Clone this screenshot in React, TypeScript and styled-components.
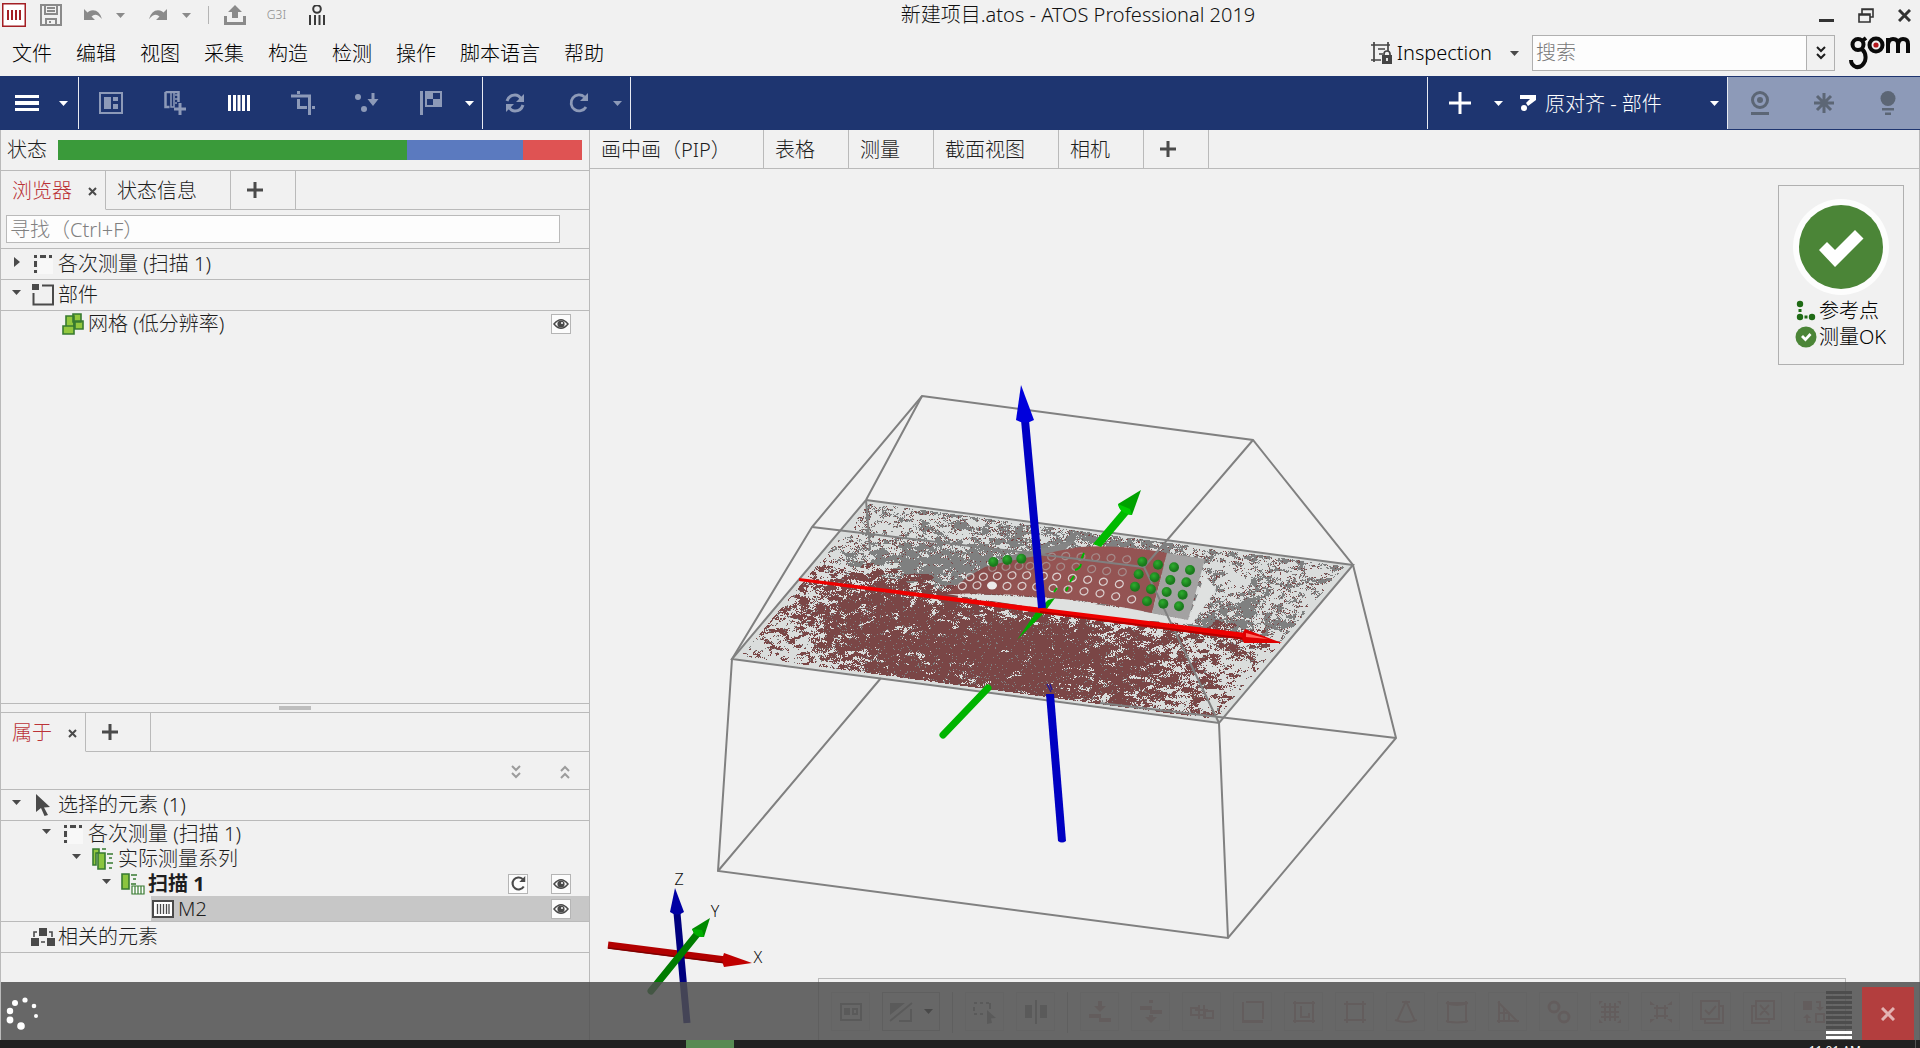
import React from "react";
import styled, { createGlobalStyle, css } from "styled-components";

const GlobalStyle = createGlobalStyle`
  *, *::before, *::after { box-sizing: border-box; }
  html, body, #root { height: 100%; }
  body {
    margin: 0;
    background: #f1f1f1;
    color: #1e1e1e;
    font-family: "Noto Sans", "Noto Sans CJK SC", sans-serif;
    font-size: 20px;
    font-weight: 300;
    line-height: 24px;
  }
  button, input {
    font: inherit;
    color: inherit;
    margin: 0;
    padding: 0;
    border: 0;
    background: none;
  }
  button { cursor: pointer; }
  svg { display: block; flex: none; }
`;

const navy = "#1e3570";
const line = "#bababa";
const dark = "#4a4a4a";
const pale = "#8d9ab8";

/* ---------- shell ---------- */

const Shell = styled.div`
  display: flex;
  flex-direction: column;
  height: 100vh;
  overflow: hidden;
`;

const TitleBar = styled.header`
  display: grid;
  grid-template-columns: 1fr auto 1fr;
  align-items: center;
  height: 30px;
  flex: none;
`;

const QuickTools = styled.div`
  display: flex;
  align-items: center;
  padding-left: 2px;
`;

const QuickButton = styled.button<{ $w: number }>`
  display: flex;
  justify-content: center;
  align-items: center;
  width: ${(p) => p.$w}px;
  height: 30px;
  font-size: 12px;
  color: #8a8a8a;
`;

const QuickRule = styled.span`
  width: 1px;
  height: 18px;
  background: #b4b4b4;
`;

const Title = styled.h1`
  margin: 0;
  font-size: 20px;
  font-weight: 300;
  line-height: 30px;
  color: #111;
  padding-left: 236px;
`;

const WindowButtons = styled.div`
  display: flex;
  justify-content: flex-end;
  gap: 10px;
  padding-right: 1px;
`;

const WindowButton = styled.button`
  display: flex;
  align-items: center;
  justify-content: center;
  width: 29px;
  height: 30px;
`;

const MenuBar = styled.div`
  display: flex;
  align-items: center;
  height: 46px;
  flex: none;
  padding: 0 10px 0 12px;
`;

const Menus = styled.nav`
  display: flex;
  gap: 24px;
  flex: 1;
  padding-top: 2px;
  color: #000;
`;

const InspectionButton = styled.button`
  display: flex;
  align-items: center;
  gap: 4px;
  color: #000;
  margin-right: 13px;

  & > span { margin-right: 14px; }
`;

const SearchBox = styled.div`
  display: flex;
  width: 303px;
  height: 36px;
  border: 1px solid #b0b0b0;
  margin-right: 14px;
`;

const SearchInput = styled.input`
  flex: 1;
  min-width: 0;
  padding-left: 3px;
  background: #fdfdfd;
  &::placeholder { color: #787878; opacity: 1; }
`;

const SearchMore = styled.button`
  display: flex;
  align-items: center;
  justify-content: center;
  width: 28px;
  border-left: 1px solid #b0b0b0;
`;

/* ---------- main toolbar ---------- */

const ToolBar = styled.div`
  display: flex;
  justify-content: space-between;
  height: 54px;
  flex: none;
  background: ${navy};
`;

const ToolSide = styled.div`
  display: flex;
`;

const ToolGroup = styled.div<{ $rule?: "left" | "right" }>`
  display: flex;
  align-items: center;
  margin: 1px 0;
  ${(p) =>
    p.$rule === "right" &&
    css`
      padding-right: 6px;
      border-right: 1px solid #e8ebf2;
    `}
  ${(p) => p.$rule === "left" && css`border-left: 1px solid #e8ebf2;`}
`;

const ToolButton = styled.button<{ $w?: number }>`
  display: flex;
  align-items: center;
  justify-content: center;
  width: ${(p) => p.$w ?? 64}px;
  height: 52px;
  color: ${pale};
`;

const Alignment = styled.button`
  display: flex;
  align-items: center;
  gap: 9px;
  width: 222px;
  height: 52px;
  padding: 0 8px 0 15px;
  color: #fff;
  & > span { flex: 1; text-align: left; padding-top: 1px; }
`;

const ModeGroup = styled.div`
  display: flex;
  align-items: center;
  width: 193px;
  margin: 1px 0;
  background: #8d9ab8;
  border-left: 1px solid #e8ebf2;
  & > button { color: #5c6675; }
`;

/* ---------- work area ---------- */

const Work = styled.main`
  position: relative;
  display: flex;
  flex: 1;
  min-height: 0;
`;

const SidePanel = styled.aside`
  display: flex;
  flex-direction: column;
  width: 590px;
  flex: none;
  border-left: 1px solid ${line};
  border-right: 1px solid ${line};
`;

const StatusRow = styled.div`
  display: flex;
  align-items: center;
  height: 40px;
  padding: 0 7px 0 6px;
  gap: 11px;
  flex: none;
`;

const StatusTrack = styled.div`
  display: flex;
  flex: 1;
  height: 20px;
`;

const StatusPart = styled.span<{ $share: number; $color: string }>`
  flex: ${(p) => p.$share};
  background: ${(p) => p.$color};
`;

const Tabs = styled.div<{ $top?: boolean }>`
  display: flex;
  height: ${(p) => (p.$top ? 40 : 39)}px;
  flex: none;
  ${(p) => p.$top && css`border-top: 1px solid ${line};`}
`;

const TabItem = styled.button<{ $w: number; $active?: boolean }>`
  display: flex;
  align-items: center;
  justify-content: space-between;
  width: ${(p) => p.$w}px;
  padding: 2px 8px 0 11px;
  border-right: 1px solid ${line};
  border-bottom: 1px solid ${(p) => (p.$active ? "transparent" : line)};
  color: ${(p) => (p.$active ? "#bb3338" : "#1e1e1e")};
  white-space: nowrap;
`;

const AddTab = styled(TabItem)`
  justify-content: flex-start;
  padding: 0 0 0 16px;
`;

const TabFill = styled.span`
  flex: 1;
  border-bottom: 1px solid ${line};
`;

const FindRow = styled.div`
  display: flex;
  height: 38px;
  padding: 5px 29px 4px 5px;
  flex: none;
`;

const FindInput = styled.input`
  flex: 1;
  height: 28px;
  border: 1px solid ${line};
  background: #fdfdfd;
  padding: 0 3px;
  &::placeholder { color: #808080; opacity: 1; }
`;

const Tree = styled.ul`
  list-style: none;
  margin: 0;
  padding: 0;
`;

const Item = styled.li<{ $kind: "head" | "leaf"; $level: number; $selected?: boolean; $bold?: boolean }>`
  display: flex;
  align-items: center;
  height: ${(p) => (p.$kind === "head" ? 31 : 25)}px;
  margin-left: ${(p) => p.$level * 30}px;
  padding-right: 18px;
  font-weight: ${(p) => (p.$bold ? 700 : 300)};
  ${(p) =>
    p.$kind === "head" &&
    css`
      border-top: 1px solid ${line};
    `}
  ${(p) =>
    p.$selected &&
    css`
      background: linear-gradient(to right, transparent 30px, #c7c7c7 30px);
    `}
`;

const CaretCell = styled.span`
  display: flex;
  justify-content: center;
  width: 31px;
  flex: none;
  padding-bottom: 5px;
`;

const IconCell = styled.span`
  display: flex;
  justify-content: center;
  width: 22px;
  flex: none;
  margin-right: 4px;
`;

const Label = styled.span`
  flex: 1;
  white-space: nowrap;
`;

const MiniButton = styled.button`
  display: flex;
  align-items: center;
  justify-content: center;
  width: 20px;
  height: 20px;
  margin-left: 23px;
  border: 1px solid #b5b5b5;
  background: #fcfcfc;
  color: ${dark};
`;

const TreeArea = styled.div`
  flex: 1;
  min-height: 0;
`;

const HeadLine = styled.div`
  border-top: 1px solid ${line};
`;

const Splitter = styled.div`
  display: flex;
  align-items: center;
  justify-content: center;
  height: 10px;
  flex: none;
  border-top: 1px solid ${line};
  border-bottom: 1px solid ${line};
  &::after {
    content: "";
    width: 32px;
    height: 4px;
    background: #bdbdbd;
  }
`;

const LowerPanel = styled.section`
  display: flex;
  flex-direction: column;
  height: 327px;
  flex: none;
`;

const FoldRow = styled.div`
  display: flex;
  align-items: center;
  justify-content: flex-end;
  gap: 29px;
  height: 37px;
  padding: 2px 14px 0 0;
  flex: none;
`;

const FoldButton = styled.button`
  display: flex;
  justify-content: center;
  width: 20px;
  color: #9c9c9c;
`;

/* ---------- viewport ---------- */

const ViewPanel = styled.section`
  display: flex;
  flex-direction: column;
  flex: 1;
  min-width: 0;
  border-right: 1px solid ${line};
`;

const ViewPort = styled.div`
  position: relative;
  flex: 1;
  min-height: 0;
  overflow: hidden;
`;

const Scene = styled.svg`
  width: 100%;
  height: 100%;
`;

const ResultCard = styled.div`
  position: absolute;
  top: 16px;
  right: 15px;
  width: 126px;
  height: 180px;
  padding: 13px 10px 0 14px;
  border: 1px solid #b0b0b0;
  background: #f1f1f1;
  display: flex;
  flex-direction: column;
  color: #000;
  & > svg { margin-bottom: 3px; }
`;

const ResultLine = styled.div`
  display: flex;
  align-items: center;
  gap: 2px;
  height: 26px;
  white-space: nowrap;
`;

const ViewTools = styled.div`
  position: absolute;
  right: 73px;
  bottom: 0;
  display: flex;
  align-items: flex-start;
  gap: 12px;
  height: 62px;
  padding: 13px 12px 0;
  border: 1px solid ${line};
  border-bottom: 0;
`;

const ViewTool = styled.button<{ $wide?: boolean; $red?: boolean }>`
  display: flex;
  align-items: center;
  justify-content: center;
  gap: 11px;
  width: ${(p) => (p.$wide ? 58 : 39)}px;
  height: 39px;
  border: 1px solid ${(p) => (p.$wide ? "#b8b8b8" : "#dcdcdc")};
  color: ${(p) => (p.$red ? "#d6aea9" : "#989898")};
`;

const ViewRule = styled.span`
  width: 1px;
  height: 41px;
  background: ${line};
`;

const BusyBar = styled.div`
  position: absolute;
  left: 1px;
  right: 0;
  bottom: 0;
  height: 58px;
  display: flex;
  align-items: flex-end;
  background: rgba(79, 79, 79, 0.854);
`;

const Spinner = styled.div`
  flex: 1;
  align-self: stretch;
  display: flex;
  align-items: center;
  padding: 5px 0 0 5px;
`;

const Meter = styled.div`
  display: flex;
  flex-direction: column;
  gap: 2px;
  width: 26px;
  margin-right: 10px;
  padding-bottom: 1px;
`;

const MeterBar = styled.span<{ $on: boolean }>`
  height: 3px;
  background: ${(p) => (p.$on ? "#fff" : "#4d4d4d")};
`;

const CancelButton = styled.button`
  display: flex;
  align-items: center;
  justify-content: center;
  width: 52px;
  height: 53px;
  margin-right: 6px;
  background: #b33e3e;
`;

const TaskBar = styled.footer`
  display: flex;
  justify-content: space-between;
  height: 8px;
  flex: none;
  overflow: hidden;
  background: #212121;
  border-right: 1px solid #555;
  margin-right: 4px;
  box-shadow: 4px 0 0 #212121;
`;

const TaskActive = styled.span`
  width: 48px;
  margin-left: 686px;
  background: #588a53;
`;

const Clock = styled.time`
  padding: 3px 54px 0 0;
  font-size: 12px;
  font-weight: 400;
  line-height: 16px;
  color: #fff;
  white-space: nowrap;
`;

/* ---------- small icons ---------- */

const Caret = ({ color = dark, dir = "down" }: { color?: string; dir?: "down" | "right" }) =>
  dir === "down" ? (
    <svg width="9" height="5" viewBox="0 0 9 5">
      <path d="M0 0h9L4.500 5z" fill={color} />
    </svg>
  ) : (
    <svg width="6" height="10" viewBox="0 0 6 10">
      <path d="M0 0v10L6 5z" fill={color} />
    </svg>
  );

const Plus = () => (
  <svg width="16" height="16" viewBox="0 0 16 16" stroke={dark} strokeWidth="3">
    <path d="M8 0v16M0 8h16" />
  </svg>
);

const Close = () => (
  <svg width="9" height="9" viewBox="0 0 9 9" stroke={dark} strokeWidth="2">
    <path d="M1 1l7 7M8 1L1 8" />
  </svg>
);

const Chevrons = ({ up }: { up?: boolean }) => (
  <svg width="10" height="14" viewBox="0 0 10 14" fill="none" stroke="currentColor" strokeWidth="2">
    <path d={up ? "M1 6l4-4 4 4M1 13l4-4 4 4" : "M1 1l4 4 4-4M1 8l4 4 4-4"} />
  </svg>
);

const Eye = () => (
  <svg width="16" height="12" viewBox="0 0 16 12">
    <path d="M1 6Q8-2.500 15 6Q8 14.500 1 6z" fill="none" stroke={dark} strokeWidth="1.500" />
    <circle cx="8" cy="6" r="3.600" fill={dark} />
    <circle cx="9" cy="5" r="1" fill="#fff" />
  </svg>
);

const Reload = ({ size = 14 }: { size?: number }) => (
  <svg width={size} height={size} viewBox="0 0 20 20" fill="none" stroke="currentColor" strokeWidth="2.800">
    <path d="M17 14A8 8 0 1 1 15.500 4" />
    <path d="M19 0v8h-8z" fill="currentColor" stroke="none" />
  </svg>
);

const DashedBox = () => (
  <svg width="20" height="20" viewBox="0 0 20 20" fill={dark}>
    <path d="M5 5h15v15H5z" fill="#f8f8f8" />
    <path d="M1 1h3v3H1zM7 1h6v3H7zM16 1h3v3h-3zM1 7h3v6H1zM1 16h3v3H1z" />
  </svg>
);

const PartBox = () => (
  <svg width="22" height="22" viewBox="0 0 22 22">
    <path d="M10 1.500h11v19H1.500V9" fill="none" stroke={dark} strokeWidth="2" />
    <path d="M0 0h7v6H0z" fill={dark} />
  </svg>
);

const MeshIcon = () => (
  <svg width="22" height="22" viewBox="0 0 22 22" fill="#93c83e" stroke="#377a30" strokeWidth="1.600">
    <path d="M11 1h8v8h-8zM4 3h8v10H4zM13 8h8v8h-8zM1 13h11v8H1z" />
    <path d="M12 8v6" />
  </svg>
);

const SeriesIcon = () => (
  <svg width="22" height="22" viewBox="0 0 22 22" stroke="#377a30" strokeWidth="1.600">
    <path d="M1 1h6v4H4v12H1zM10 1h4" fill="#93c83e" />
    <path d="M6 5h7v16H6z" fill="#8bc53f" />
    <path d="M15 6h6M17 10h3M15 15h6M17 20h3" fill="none" />
  </svg>
);

const ScanIcon = () => (
  <svg width="24" height="22" viewBox="0 0 24 22" stroke="#377a30" strokeWidth="1.600" fill="none">
    <path d="M1 1h7v15H1z" fill="#8bc53f" />
    <path d="M10 2h6M12 6h3M10 11h5" />
    <path d="M11 13h12v8H11zM14 13v8M17 13v8M20 13v8" fill="#fff" strokeWidth="1.200" />
  </svg>
);

const MeasureIcon = () => (
  <svg width="22" height="18" viewBox="0 0 22 18">
    <path d="M1 1h20v16H1z" fill="#fff" stroke={dark} strokeWidth="2" />
    <path d="M5.500 4v10M8.500 4v10M11.500 4v10M14.500 4v10M17 4v10" stroke={dark} strokeWidth="1.300" />
  </svg>
);

const PointerIcon = () => (
  <svg width="18" height="22" viewBox="0 0 18 22">
    <path d="M2 0l14 13-6 .5L14 21l-3.500 1-3.500-8L2 18z" fill={dark} />
  </svg>
);

const RelatedIcon = () => (
  <svg width="24" height="18" viewBox="0 0 24 18" fill={dark}>
    <path d="M8 0h8v8H8zM0 10h8v8H0zM16 10h8v8h-8z" />
    <path d="M6 4H3v5M18 4h3v5M10 14h4" fill="none" stroke={dark} strokeWidth="1.600" />
  </svg>
);

/* ---------- 3D scene ---------- */

const hash = (x: number, y: number) => {
  let h = Math.imul(x, 374761393) + Math.imul(y, 668265263);
  h = Math.imul(h ^ (h >>> 13), 1274126177);
  return ((h ^ (h >>> 16)) >>> 0) / 4294967296;
};

const smooth = (x: number, y: number) => {
  const xi = Math.floor(x);
  const yi = Math.floor(y);
  const fx = x - xi;
  const fy = y - yi;
  const sx = fx * fx * (3 - 2 * fx);
  const sy = fy * fy * (3 - 2 * fy);
  const a = hash(xi, yi) * (1 - sx) + hash(xi + 1, yi) * sx;
  const b = hash(xi, yi + 1) * (1 - sx) + hash(xi + 1, yi + 1) * sx;
  return a * (1 - sy) + b * sy;
};

const bump = (u: number, v: number, cu: number, cv: number, ru: number, rv: number) =>
  Math.exp(-(((u - cu) / ru) ** 2) - ((v - cv) / rv) ** 2);

// Scan surface: a parallelogram with origin (866,500) and sides (487,65) and (-134,159).
const buildSurface = () => {
  const paths = { red: "", grey: "" };
  const det = 487 * 159 + 134 * 65;
  const classify = (x: number, y: number): "" | "red" | "grey" => {
    const dx = x - 866;
    const dy = y - 500;
    const u = (dx * 159 + dy * 134) / det;
    const v = (487 * dy - 65 * dx) / det;
    if (u < 0.01 || u > 0.985 || v < 0.012 || v > 0.975) return "";
    // Blob axes follow the sides of the plate, with a little turbulence.
    const wx = x + y * 0.5 + 5 * smooth(x / 9, y / 7);
    const wy = y - x * 0.13 + 4 * smooth(x / 11 + 30, y / 9);
    const n =
      0.4 * smooth(wx / 9 + 40, wy / 4.5) +
      0.34 * smooth(wx / 4 + 9, wy / 2.2 + 70) +
      0.26 * hash(x + 500, y);
    const fill =
      0.41 +
      0.36 * bump(u, v, 0.52, 0.78, 0.34, 0.24) +
      0.14 * bump(u, v, 0.18, 0.58, 0.2, 0.18) +
      0.2 * bump(u, v, 0.28, 0.3, 0.2, 0.13) +
      0.12 * bump(u, v, 0.45, 0.04, 0.3, 0.08) +
      0.2 * bump(u, v, 0.86, 0.4, 0.08, 0.12) -
      0.08 * bump(u, v, 0.97, 0.7, 0.1, 0.4) -
      0.08 * bump(u, v, 0.03, 0.2, 0.06, 0.3) -
      0.12 * bump(u, v, 0.04, 0.95, 0.12, 0.15);
    if (n > fill + 0.05) return "";
    const edge = n > fill;
    const speck = hash(x, y + 900);
    const front = v + 0.12 * (smooth(x / 14, y / 6) - 0.5) > 0.47 - 0.1 * (1 - u);
    if (front) return (edge && speck < 0.4) || speck < 0.04 ? "grey" : "red";
    return edge && speck < 0.6 ? "red" : "grey";
  };
  for (let y = 501; y < 723; y++) {
    let run: "" | "red" | "grey" = "";
    let start = 0;
    for (let x = 732; x < 1355; x++) {
      const kind = classify(x, y);
      if (kind !== run) {
        if (run) paths[run] += `M${start} ${y}h${x - start}v1h${start - x}z`;
        run = kind;
        start = x;
      }
    }
  }
  return paths;
};

const surface = buildSurface();

const at = (pts: number[][]) => pts.map(([x, y]) => [930 + x / 3, 530 + y / 3]);

const rings = at([
  [365, 80], [407, 78], [453, 80], [497, 82], [543, 84], [590, 88],
  [188, 113], [228, 110], [267, 108], [300, 108], [348, 108], [392, 110], [438, 110], [485, 117], [530, 123], [577, 126],
  [120, 141], [160, 140], [202, 138], [246, 136], [290, 136], [340, 138], [380, 140], [427, 144], [473, 149], [520, 155], [568, 162],
  [97, 168], [141, 166], [231, 168], [276, 168], [320, 170], [369, 174], [414, 178], [462, 184], [510, 190], [557, 199], [605, 208],
]);

const markers = at([
  [190, 96], [232, 90], [274, 86],
  [637, 95], [684, 104], [732, 112], [780, 120],
  [626, 133], [674, 142], [721, 150], [769, 157],
  [615, 170], [663, 178], [710, 186], [758, 194],
  [651, 214], [700, 221], [747, 229],
]);

const SceneDrawing = () => (
  <Scene viewBox="590 169 1329 871" role="img" aria-label="3D">
    <defs>
      <radialGradient id="ball" cx="0.4" cy="0.35">
        <stop offset="0" stopColor="#2fae2f" />
        <stop offset="1" stopColor="#1a7a1c" />
      </radialGradient>
      <linearGradient id="sheet" x1="0" y1="0" x2="1" y2="0.300">
        <stop offset="0" stopColor="#7d4645" />
        <stop offset="0.500" stopColor="#955453" />
        <stop offset="1" stopColor="#935453" />
      </linearGradient>
    </defs>

    <path d="M866 500L1353 565L1219 723L732 659z" fill="#dadddc" />
    <g shapeRendering="crispEdges">
      <path d={surface.grey} fill="#7f8080" />
      <path d={surface.red} fill="#7a4646" />
    </g>

    <path d="M947 594L993 595L1063 599L1152 613L1188 620L1205 575L1216 590L1192 624L1110 618L1045 609L985 600z" fill="#dfe1e0" />
    <path d="M960 585Q1000 553 1036 550L1073 541L1060 556L980 575z" fill="#858585" />
    <path d="M947 594Q965 577 985 567Q1010 560 1036 556Q1060 550 1080 547Q1120 544 1167 553L1152 613Q1100 602 1063 599Q1000 592 947 594z" fill="url(#sheet)" />
    <path d="M1167 553L1205 559L1188 620L1152 613z" fill="#a3a2a2" />
    <g fill="none" strokeWidth="1.300">
      {rings.map(([x, y], i) => (
        <ellipse key={i} cx={x} cy={y} rx="4" ry="3.400" stroke={i < 16 ? "#a58c8b" : "#dcd2d1"} transform={`rotate(-25 ${x} ${y})`} />
      ))}
    </g>
    <ellipse cx="992" cy="585.500" rx="5" ry="4" fill="#ececec" />
    <g stroke="#00b400" strokeWidth="2" fill="none">
      <path d="M1084 553l-3 7M1081 564q-1 5-6 6M1070 582l4-6M1066 591l2-4M1054 592l3-4" />
    </g>

    <g fill="none" stroke="#808080" strokeWidth="2">
      <path d="M922 396L1253 440L1353 565L1396 738L1228 938L718 871L732 659L812 527z" />
      <path d="M922 396L866 500M866 500L1353 565L1219 723L732 659z" />
      <path d="M1219 723L1228 938M718 871L881 678M1253 440L1144 567L1219 723M866 500L870 549M1396 738L1100 703" />
      <path d="M812 527L1144 567" />
    </g>

    {markers.map(([x, y], i) => (
      <circle key={i} cx={x} cy={y} r="5" fill="url(#ball)" />
    ))}

    <path d="M1093 544L1126 505L1132 510L1101 547z" fill="#00ba00" />
    <path d="M1141 490L1118 504Q1120 514 1132 515z" fill="#00a200" />
    <path d="M1118 504Q1120 514 1132 515L1130 509Z" fill="#00cc00" />
    <path d="M1048 600L1055 598L1044 613L1017 640L1036 612z" fill="#00ac00" />
    <path d="M988 688L943 735" stroke="#00b400" strokeWidth="7" strokeLinecap="round" />
    <path d="M799 578L1043 608L1246 633L1246 640L1040 613L799 581z" fill="#ef0000" />
    <path d="M1040 613L1246 640L1246 638L1040 611z" fill="#b40000" />
    <path d="M1245 629L1282 643L1244 643Q1240 636 1245 629z" fill="#e00000" />
    <path d="M1246 633l22 6-22-2z" fill="#ff6a60" />
    <path d="M1025 420L1042 608" stroke="#0000c4" strokeWidth="8" />
    <path d="M1021 385L1016 420Q1025 425 1034 420z" fill="#0000dc" />
    <path d="M1046 694L1054 694L1066 841Q1062 844 1058 841z" fill="#0000c2" />
    <path d="M1047 684l4 8M1050 684l2 6" stroke="#2a1a90" strokeWidth="1.500" />

    <path d="M608 945L726 960" stroke="#b20000" strokeWidth="7" />
    <path d="M608 948L726 963" stroke="#7e0000" strokeWidth="1.500" />
    <path d="M724 953L752 963L724 967Q721 960 724 953z" fill="#c00000" />
    <path d="M677 913L687 1023" stroke="#00007e" strokeWidth="7" />
    <path d="M675 888L670 912Q677 917 684 912z" fill="#0000a4" />
    <path d="M651 991L698 933" stroke="#007c00" strokeWidth="7" strokeLinecap="round" />
    <path d="M710 918L692 929Q695 938 704 937z" fill="#008a00" />
    <path d="M692 929Q695 938 704 937L702 930z" fill="#00b000" />
    <g fill="#111" fontFamily="Noto Sans, sans-serif" fontSize="16" textAnchor="middle">
      <text x="679" y="885">Z</text>
      <text x="715" y="917">Y</text>
      <text x="758" y="963">X</text>
    </g>
  </Scene>
);

/* ---------- bottom view tools ---------- */

const viewGlyphs: { id: string; d: string; f?: string }[] = [
  { id: "swap-down", f: "M10 1h4v5h4l-6 6-6-6h4zM1 14h12v4h10v4H11v-4H1z", d: "" },
  { id: "drop", f: "M10 0h4v3h-4zM1 6h12v4h10v4H11v-4H1zM10 15h4v2h4l-6 6-6-6h4z", d: "" },
  { id: "link", d: "M1 8h8v7H1zM15 11h8v7h-8zM9 5v14M14 5v14M5 10h13M6 15h9" },
  { id: "frame-l", d: "M5 2h17v17M2 2v20h20M3 21h19" },
  { id: "frame-in", d: "M1 3h22M1 21h22M3 1v22M21 1v22M9 6v11h8v-4" },
  { id: "rect", d: "M1 4h22M1 20h22M4 1v22M20 1v22" },
  { id: "cone", d: "M12 1L3 21M12 1l9 20M1 20q11 4 22 0M8 2h8" },
  { id: "cylinder", d: "M3 1v22M21 1v22M1 3q11 4 22 0M1 3h22M1 21q11 3 22 0" },
  { id: "grid-angle", d: "M3 1v22M1 21h22M2 2l20 20M3 13h10v8M8 8v13" },
  { id: "rings", d: "M2 7a5 5 0 1 0 10 0a5 5 0 1 0-10 0M12 17a5 5 0 1 0 10 0a5 5 0 1 0-10 0" },
  { id: "mesh", f: "M1 1h4l-4 4zM23 1v4l-4-4zM1 23v-4l4 4zM23 23h-4l4-4z", d: "M3 7h18M3 12h18M3 17h18M7 3v18M12 3v18M17 3v18" },
  { id: "shrink", f: "M1 1l5 4H1zM23 1v4h-5zM1 23v-4h5zM23 23l-5-4h5z", d: "M5 8h14M5 16h14M8 5v14M16 5v14" },
  { id: "check", d: "M1 1h18v18H1zM5 19v4h18V6h-4M5 10l4 4 7-8" },
  { id: "cross", d: "M5 1h18v18H5zM5 6H1v17h17v-4M9 5l9 10M18 5L9 15" },
  { id: "exchange", f: "M1 1h9v9H1zM14 7h8l-4 4zM1 18l4-4 4 4z", d: "M14 2h4v5M5 17v5h4M14 14h8v8h-8z" },
];

const StrokeIcon = ({ d, f, w = 2, size = 24 }: { d?: string; f?: string; w?: number; size?: number }) => (
  <svg width={size} height={size} viewBox="0 0 24 24">
    {d && <path d={d} fill="none" stroke="currentColor" strokeWidth={w} />}
    {f && <path d={f} fill="currentColor" />}
  </svg>
);

const menus = ["文件", "编辑", "视图", "采集", "构造", "检测", "操作", "脚本语言", "帮助"];

const viewTabs = [
  { name: "画中画（PIP）", w: 174 },
  { name: "表格", w: 85 },
  { name: "测量", w: 85 },
  { name: "截面视图", w: 125 },
  { name: "相机", w: 85 },
];

const spinnerDots = [
  [4, 24, 3.4], [4, 15, 3.2], [9, 7, 3], [19, 4, 2.6], [28, 10, 2.3], [30, 20, 2], [15, 30, 3.8],
];

export default function App() {
  return (
    <>
      <GlobalStyle />
      <Shell>
        <TitleBar>
          <QuickTools>
            <QuickButton $w={24} aria-label="GOM">
              <svg width="24" height="24" viewBox="0 0 24 24">
                <path d="M.75.75h22.500v22.500H.75z" fill="#fff" stroke="#a31f24" strokeWidth="1.500" />
                <path d="M6 7v10M10 7v10M14 7v10M18 7v10" stroke="#a31f24" strokeWidth="2" />
              </svg>
            </QuickButton>
            <QuickButton $w={50} aria-label="保存">
              <svg width="22" height="22" viewBox="0 0 22 22" fill="none" stroke="#8a8a8a" strokeWidth="2">
                <path d="M1 1h20v20H1zM5 1v9h12V1M7 4h8M7 7h8M6 21v-6h10v6M9 18h2" />
              </svg>
            </QuickButton>
            <QuickButton $w={34} aria-label="撤销">
              <svg width="20" height="14" viewBox="0 0 20 14" fill="#8a8a8a">
                <path d="M1 1v11h11L8.500 8.500Q13 4 19 11Q16 1 8 2.500Q6 3 4.500 4.500z" />
              </svg>
            </QuickButton>
            <QuickButton $w={20}><Caret color="#8a8a8a" /></QuickButton>
            <QuickButton $w={56} aria-label="重做">
              <svg width="20" height="14" viewBox="0 0 20 14" fill="#8a8a8a">
                <path d="M19 1v11H8l3.500-3.500Q7 4 1 11Q4 1 12 2.500Q14 3 15.500 4.500z" />
              </svg>
            </QuickButton>
            <QuickButton $w={0}><Caret color="#8a8a8a" /></QuickButton>
            <QuickButton $w={22} aria-hidden="true" />
            <QuickRule />
            <QuickButton $w={52} aria-label="导出">
              <svg width="22" height="20" viewBox="0 0 22 20" fill="#8a8a8a">
                <path d="M11 0l7 7h-4v6H8V7H4zM0 11h3v6h16v-6h3v9H0z" />
              </svg>
            </QuickButton>
            <QuickButton $w={31}>G3I</QuickButton>
            <QuickButton $w={50} aria-label="传感器">
              <svg width="18" height="20" viewBox="0 0 18 20" fill="none" stroke="#3a3a3a" strokeWidth="2">
                <circle cx="9" cy="4" r="3.800" />
                <path d="M2 10v10M7 10v10M11.500 10v10M16 10v10" />
              </svg>
            </QuickButton>
          </QuickTools>
          <Title>新建项目.atos - ATOS Professional 2019</Title>
          <WindowButtons>
            <WindowButton aria-label="最小化">
              <svg width="15" height="16" viewBox="0 0 15 16"><path d="M0 12h15v3H0z" fill="#333" /></svg>
            </WindowButton>
            <WindowButton aria-label="还原">
              <svg width="16" height="16" viewBox="0 0 16 16" fill="none" stroke="#333" strokeWidth="1.600">
                <path d="M4 7V2h11v8h-3M4 2.500h11" />
                <path d="M1 7h11v8H1zM1 8h11" />
              </svg>
            </WindowButton>
            <WindowButton aria-label="关闭">
              <svg width="13" height="13" viewBox="0 0 13 13" stroke="#333" strokeWidth="3"><path d="M1 1l11 11M12 1L1 12" /></svg>
            </WindowButton>
          </WindowButtons>
        </TitleBar>

        <MenuBar>
          <Menus>
            {menus.map((m) => (
              <button key={m}>{m}</button>
            ))}
          </Menus>
          <InspectionButton>
            <svg width="22" height="22" viewBox="0 0 22 22" fill="none" stroke="#444" strokeWidth="1.700">
              <path d="M0 3h19M3 0v20M0 18h10M17 0v9M7 7h7M8 12h4" />
              <path d="M13 14v-2a3 3 0 0 1 6 0v2" />
              <path d="M11 13h10v9H11z" fill="#444" stroke="none" />
              <path d="M16 16v3" stroke="#fff" />
            </svg>
            <span>Inspection</span>
            <Caret />
          </InspectionButton>
          <SearchBox>
            <SearchInput placeholder="搜索" aria-label="搜索" />
            <SearchMore aria-label="更多"><Chevrons /></SearchMore>
          </SearchBox>
          <svg width="61" height="34" viewBox="0 0 61 34" fill="none" stroke="#0a0a0a" strokeWidth="4">
            <circle cx="9" cy="8.500" r="5.500" />
            <path d="M13 13Q18 18 16 25Q13 32 7 31Q2 29 2 24M13 5l4-3" />
            <circle cx="27" cy="9" r="6.500" />
            <circle cx="27" cy="9" r="2.600" fill="#b3161c" stroke="none" />
            <path d="M39 17V2M39 8Q40 3 44 3Q49 3 49 8V17M49 8Q50 3 54 3Q59 3 59 8V17" />
          </svg>
        </MenuBar>

        <ToolBar>
          <ToolSide>
            <ToolGroup $rule="right">
              <ToolButton $w={54} aria-label="菜单">
                <svg width="24" height="16" viewBox="0 0 24 16" fill="#fff"><path d="M0 0h24v3H0zM0 6h24v4H0zM0 13h24v3H0z" /></svg>
              </ToolButton>
              <ToolButton $w={18}><Caret color="#fff" /></ToolButton>
            </ToolGroup>
            <ToolGroup $rule="right">
              <ToolButton aria-label="布局">
                <svg width="24" height="22" viewBox="0 0 24 22" fill="currentColor">
                  <path d="M1 1h22v20H1z" fill="none" stroke="currentColor" strokeWidth="2" />
                  <path d="M5 5h7v12H5zM14 5h5v4h-5zM14 12h5v5h-5z" />
                </svg>
              </ToolButton>
              <ToolButton aria-label="添加测量">
                <svg width="22" height="24" viewBox="0 0 22 24" fill="none" stroke="currentColor">
                  <path d="M1.500 1h13v10M1.500 1v15h4" strokeWidth="2.500" />
                  <path d="M7 0v16h3V0zM11 4h3M11 8h3M11 12h2" strokeWidth="1.500" />
                  <path d="M16 12v12M10 18h12" strokeWidth="3" />
                </svg>
              </ToolButton>
              <ToolButton aria-label="扫描">
                <svg width="22" height="16" viewBox="0 0 22 16" stroke="#fff" strokeWidth="3"><path d="M1.500 0v16M6.500 0v16M11 0v16M15.500 0v16M20.500 0v16" /></svg>
              </ToolButton>
              <ToolButton aria-label="裁剪">
                <svg width="24" height="24" viewBox="0 0 24 24" fill="none" stroke="currentColor" strokeWidth="3">
                  <path d="M0 5h18.500v19M7.500 0v3M7.500 8v8.500H16M21 16.500h3" />
                </svg>
              </ToolButton>
              <ToolButton aria-label="参考点">
                <svg width="24" height="20" viewBox="0 0 24 20" fill="currentColor">
                  <circle cx="3" cy="4" r="3" /><circle cx="9" cy="16" r="3" />
                  <path d="M16.500 0h3v6h4l-5.500 7-5.500-7h4z" />
                </svg>
              </ToolButton>
              <ToolButton aria-label="对齐">
                <svg width="22" height="24" viewBox="0 0 22 24" fill="currentColor">
                  <path d="M0 0h3v24H0zM5 0h17v16H5zM7 8v6h6V8zM13 2v6h7V2z" fillRule="evenodd" />
                </svg>
              </ToolButton>
              <ToolButton $w={13}><Caret color="#fff" /></ToolButton>
            </ToolGroup>
            <ToolGroup $rule="right">
              <ToolButton aria-label="同步">
                <svg width="20" height="20" viewBox="0 0 20 20" fill="none" stroke="currentColor" strokeWidth="3">
                  <path d="M2 8q2-6 8-6q4 0 6 4M18 12q-2 6-8 6q-4 0-6-4" />
                  <path d="M19 1v8h-8zM1 19v-8h8z" fill="currentColor" stroke="none" />
                </svg>
              </ToolButton>
              <ToolButton aria-label="重新计算"><Reload size={20} /></ToolButton>
              <ToolButton $w={13}><Caret color={pale} /></ToolButton>
            </ToolGroup>
          </ToolSide>
          <ToolSide>
            <ToolGroup $rule="left">
              <ToolButton aria-label="新建">
                <svg width="22" height="22" viewBox="0 0 22 22" stroke="#fff" strokeWidth="3"><path d="M11 0v22M0 11h22" /></svg>
              </ToolButton>
              <ToolButton $w={13}><Caret color="#fff" /></ToolButton>
              <Alignment>
                <svg width="16" height="16" viewBox="0 0 16 16" fill="#fff">
                  <path d="M0 0h16v5L8 11l-2-3 4-4H0z" /><circle cx="4" cy="13" r="3" />
                </svg>
                <span>原对齐 - 部件</span>
                <Caret color="#fff" />
              </Alignment>
            </ToolGroup>
            <ModeGroup>
              <ToolButton aria-label="相机">
                <svg width="20" height="24" viewBox="0 0 20 24" fill="none" stroke="currentColor" strokeWidth="3">
                  <circle cx="10" cy="9" r="7.500" /><circle cx="10" cy="9" r="3" fill="currentColor" stroke="none" />
                  <path d="M1 22.500h18" />
                </svg>
              </ToolButton>
              <ToolButton aria-label="激光">
                <svg width="22" height="22" viewBox="0 0 22 22" stroke="currentColor" strokeWidth="3"><path d="M11 1v20M1 11h20M4 4l14 14M18 4L4 18" /></svg>
              </ToolButton>
              <ToolButton aria-label="照明">
                <svg width="16" height="24" viewBox="0 0 16 24" fill="currentColor"><circle cx="8" cy="7.500" r="7.500" /><path d="M2 17h12v2.500H2zM5 21.500h6V24H5z" /></svg>
              </ToolButton>
            </ModeGroup>
          </ToolSide>
        </ToolBar>

        <Work>
          <SidePanel>
            <StatusRow>
              <span>状态</span>
              <StatusTrack>
                <StatusPart $share={349} $color="#3a9a3a" />
                <StatusPart $share={116} $color="#5b7abf" />
                <StatusPart $share={59} $color="#df5353" />
              </StatusTrack>
            </StatusRow>
            <Tabs $top>
              <TabItem $w={105} $active>浏览器<Close /></TabItem>
              <TabItem $w={125}>状态信息</TabItem>
              <AddTab $w={65} aria-label="添加"><Plus /></AddTab>
              <TabFill />
            </Tabs>
            <FindRow>
              <FindInput placeholder="寻找（Ctrl+F）" aria-label="寻找" />
            </FindRow>
            <TreeArea>
              <Tree>
                <Item $kind="head" $level={0}>
                  <CaretCell><Caret dir="right" /></CaretCell>
                  <IconCell><DashedBox /></IconCell>
                  <Label>各次测量 (扫描 1)</Label>
                </Item>
                <Item $kind="head" $level={0}>
                  <CaretCell><Caret /></CaretCell>
                  <IconCell><PartBox /></IconCell>
                  <Label>部件</Label>
                </Item>
              </Tree>
              <HeadLine />
              <Tree>
                <Item $kind="leaf" $level={1}>
                  <CaretCell />
                  <IconCell><MeshIcon /></IconCell>
                  <Label>网格 (低分辨率)</Label>
                  <MiniButton aria-label="可见"><Eye /></MiniButton>
                </Item>
              </Tree>
            </TreeArea>
            <Splitter />
            <LowerPanel>
              <Tabs>
                <TabItem $w={85} $active>属于<Close /></TabItem>
                <AddTab $w={65} aria-label="添加"><Plus /></AddTab>
                <TabFill />
              </Tabs>
              <FoldRow>
                <FoldButton aria-label="展开"><Chevrons /></FoldButton>
                <FoldButton aria-label="折叠"><Chevrons up /></FoldButton>
              </FoldRow>
              <Tree>
                <Item $kind="head" $level={0}>
                  <CaretCell><Caret /></CaretCell>
                  <IconCell><PointerIcon /></IconCell>
                  <Label>选择的元素 (1)</Label>
                </Item>
              </Tree>
              <HeadLine />
              <Tree>
                <Item $kind="leaf" $level={1}>
                  <CaretCell><Caret /></CaretCell>
                  <IconCell><DashedBox /></IconCell>
                  <Label>各次测量 (扫描 1)</Label>
                </Item>
                <Item $kind="leaf" $level={2}>
                  <CaretCell><Caret /></CaretCell>
                  <IconCell><SeriesIcon /></IconCell>
                  <Label>实际测量系列</Label>
                </Item>
                <Item $kind="leaf" $level={3} $bold>
                  <CaretCell><Caret /></CaretCell>
                  <IconCell><ScanIcon /></IconCell>
                  <Label>扫描 1</Label>
                  <MiniButton aria-label="重新计算"><Reload size={15} /></MiniButton>
                  <MiniButton aria-label="可见"><Eye /></MiniButton>
                </Item>
                <Item $kind="leaf" $level={4} $selected>
                  <CaretCell />
                  <IconCell><MeasureIcon /></IconCell>
                  <Label>M2</Label>
                  <MiniButton aria-label="可见"><Eye /></MiniButton>
                </Item>
                <Item $kind="head" $level={0}>
                  <CaretCell />
                  <IconCell><RelatedIcon /></IconCell>
                  <Label>相关的元素</Label>
                </Item>
              </Tree>
              <HeadLine />
            </LowerPanel>
          </SidePanel>

          <ViewPanel>
            <Tabs>
              {viewTabs.map((t) => (
                <TabItem key={t.name} $w={t.w}>{t.name}</TabItem>
              ))}
              <AddTab $w={65} aria-label="添加"><Plus /></AddTab>
              <TabFill />
            </Tabs>
            <ViewPort>
              <SceneDrawing />
              <ResultCard>
                <svg width="96" height="96" viewBox="0 0 96 96">
                  <circle cx="48" cy="48" r="48" fill="#fdfdfd" />
                  <circle cx="48" cy="48" r="42" fill="#4b8537" />
                  <path d="M26 51l8-8 8 8 20-20 8.500 8.500L42 68z" fill="#fff" />
                </svg>
                <ResultLine>
                  <svg width="24" height="22" viewBox="0 0 24 22" fill="#1f6b15">
                    <circle cx="7" cy="4" r="3.200" /><circle cx="7" cy="17" r="3.200" /><circle cx="19" cy="17" r="3.200" />
                    <path d="M5.500 9h3v3h-3zM11.500 15.500h3v3h-3z" />
                  </svg>
                  参考点
                </ResultLine>
                <ResultLine>
                  <svg width="24" height="22" viewBox="0 0 24 22">
                    <circle cx="13" cy="11" r="10.500" fill="#4b8537" />
                    <path d="M8 11l2-2 2.500 2.500L16.500 7l2 2-6 6.500z" fill="#fff" />
                  </svg>
                  测量OK
                </ResultLine>
              </ResultCard>
              <ViewTools>
                <ViewTool aria-label="快照"><StrokeIcon d="M2 4h20v16H2zM14 9h4v5h-4z" f="M5 8h6v7H5z" /></ViewTool>
                <ViewTool $wide aria-label="着色"><StrokeIcon f="M1 3h15L1 15z" d="M1 21L23 3M22 9v12H10" /><Caret color="#222" /></ViewTool>
                <ViewRule />
                <ViewTool aria-label="选择"><StrokeIcon d="M1 3h3M7 3h3M13 3h3M1 14h3M7 14h3M1 7v4M17 3v6" f="M14 10l9 8-5 .5L19 23l-5 1z" /></ViewTool>
                <ViewTool aria-label="对称"><StrokeIcon d="M12 0v24" f="M1 5h7v13H1zM16 5h7v13h-7z" /></ViewTool>
                <ViewRule />
                {viewGlyphs.map((g) => (
                  <ViewTool key={g.id} $red aria-label={g.id}>
                    <StrokeIcon d={g.d} f={g.f} w={g.id === "rings" ? 3 : 2} />
                  </ViewTool>
                ))}
              </ViewTools>
            </ViewPort>
          </ViewPanel>

          <BusyBar>
            <Spinner>
              <svg width="34" height="36" viewBox="0 0 34 36" fill="#fff">
                {spinnerDots.map(([x, y, r], i) => (
                  <circle key={i} cx={x} cy={y} r={r} />
                ))}
              </svg>
            </Spinner>
            <Meter>
              {Array.from({ length: 10 }, (_, i) => (
                <MeterBar key={i} $on={i > 7} />
              ))}
            </Meter>
            <CancelButton aria-label="取消">
              <svg width="14" height="14" viewBox="0 0 14 14" stroke="#e3b3b3" strokeWidth="3"><path d="M1 1l12 12M13 1L1 13" /></svg>
            </CancelButton>
          </BusyBar>
        </Work>

        <TaskBar>
          <TaskActive />
          <Clock>11:01 AM</Clock>
        </TaskBar>
      </Shell>
    </>
  );
}
